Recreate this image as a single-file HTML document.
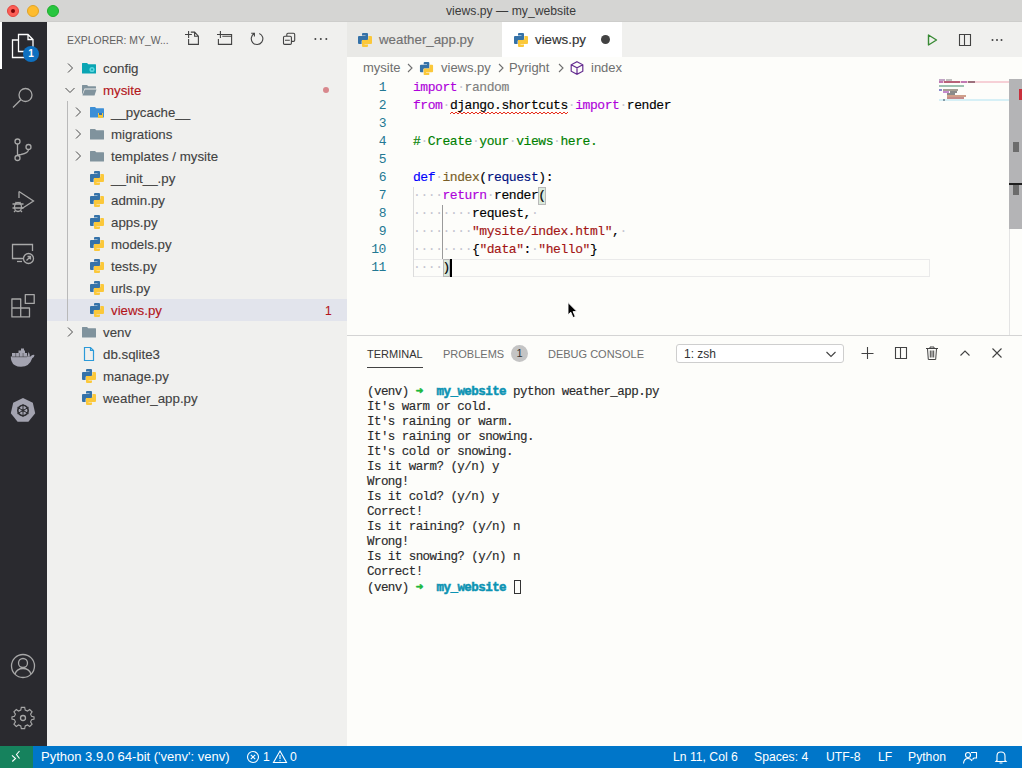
<!DOCTYPE html>
<html><head><meta charset="utf-8">
<style>
*{margin:0;padding:0;box-sizing:border-box}
html,body{width:1022px;height:768px;overflow:hidden;background:#fdfdfa;font-family:"Liberation Sans",sans-serif}
div,span,svg{position:absolute}
#title{left:0;top:0;width:1022px;height:22px;background:#d5d5d3;border-bottom:1px solid #cdcdcb}
#title .t{left:0;width:1022px;top:4px;text-align:center;font-size:12.2px;color:#3a3a3a;line-height:14px}
.tl{width:12px;height:12px;border-radius:50%;top:5px}
#act{left:0;top:22px;width:47px;height:724px;background:#2a2a2f}
#side{left:47px;top:22px;width:300px;height:724px;background:#f0f0ee}
#editor{left:347px;top:22px;width:675px;height:724px;background:#fdfdfa}
#tabs{left:347px;top:22px;width:675px;height:35px;background:#f0f0ee}
.tab{top:0;height:35px;font-size:13.3px;color:#717171;line-height:35px;white-space:nowrap;-webkit-text-stroke:0.15px currentColor}
#status{left:0;top:746px;width:1022px;height:22px;background:#0076c9;color:#fff;font-size:12.2px;line-height:22px;white-space:nowrap}
.row{left:0;width:300px;height:22px;font-size:13.3px;color:#424242;line-height:22px;white-space:nowrap;-webkit-text-stroke:0.12px currentColor}
.row span{position:static}
.code{left:66px;font-family:"Liberation Mono",monospace;font-size:13px;letter-spacing:-0.43px;white-space:pre;line-height:18px;color:#000;-webkit-text-stroke:0.15px currentColor}
.ln{left:0;width:39px;text-align:right;font-family:"Liberation Mono",monospace;font-size:13px;letter-spacing:-0.43px;line-height:18px;color:#237893}
.term{font-family:"Liberation Mono",monospace;font-size:12.5px;letter-spacing:-0.55px;white-space:pre;line-height:15px;color:#2a2a2a;-webkit-text-stroke:0.15px currentColor}
.term span{position:static}
.term b{-webkit-text-stroke:0.5px currentColor}
.code span{position:static}
.kw{color:#af00db}.df{color:#0000ff}.fn{color:#795e26}.pr{color:#001080}.st{color:#a31515}.cm{color:#008000}.fd{color:#7f7f7f}
.ws{color:#c4c4d0;-webkit-text-stroke:0}
.ic{stroke:#c5c5c5;fill:none;stroke-width:1.2}
.sic{stroke:#424242;fill:none;stroke-width:1.1}
</style></head><body>
<svg width="0" height="0" style="left:0;top:0">
  <defs>
    <symbol id="py" viewBox="0 0 16 16">
      <path fill="#3572a8" d="M6 1H10Q11 1 11 2V8H6Q4.6 8 4.6 9.4V12H2Q1 12 1 11V5Q1 4 2 4H8.5V3.4H5V2Q5 1 6 1Z"/>
      <path fill="#fbc83a" d="M10 15H6Q5 15 5 14V8H10Q11.4 8 11.4 6.6V4H14Q15 4 15 5V11Q15 12 14 12H7.5V12.6H11V14Q11 15 10 15Z"/>
    </symbol>
    <symbol id="fold" viewBox="0 0 16 16">
      <path fill="#80939d" d="M1.5 3h4.5l1.5 1.5h7v9h-13z"/>
    </symbol>
  </defs>
</svg>

<div id="title">
  <div class="tl" style="left:7px;background:#fd5e56;border:1px solid #e2463f"><div style="left:3px;top:3px;width:4px;height:4px;border-radius:50%;background:#7e0508"></div></div>
  <div class="tl" style="left:27px;background:#febc2e;border:1px solid #e1a325"></div>
  <div class="tl" style="left:47px;background:#27c63f;border:1px solid #1dad2b"></div>
  <div class="t">views.py — my_website</div>
</div>

<!-- ACTIVITY BAR -->
<div id="act">
  <div style="left:0;top:0;width:2px;height:47px;background:#fff"></div>
  <!-- files -->
  <svg style="left:9px;top:10px" width="28" height="28" viewBox="0 0 28 28" fill="none" stroke="#fff" stroke-width="1.3">
    <path d="M9.5 2.5H19L24 7.5V19.5H9.5Z M19 2.5V7.5H24"/>
    <path d="M9.5 8H3.5V25.5H16.5V19.5"/>
  </svg>
  <div style="left:23px;top:24px;width:16px;height:16px;border-radius:50%;background:#0e70c0;color:#fff;font-size:10px;font-weight:bold;text-align:center;line-height:16px">1</div>
  <!-- search -->
  <svg style="left:9px;top:62px" width="28" height="28" viewBox="0 0 28 28" fill="none" stroke="#a8a8a8" stroke-width="1.3">
    <circle cx="16.5" cy="11" r="6.5"/><path d="M11.8 15.8L4 23.5"/>
  </svg>
  <!-- scm -->
  <svg style="left:9px;top:114px" width="28" height="28" viewBox="0 0 28 28" fill="none" stroke="#a8a8a8" stroke-width="1.3">
    <circle cx="8.5" cy="5.5" r="2.5"/><circle cx="8.5" cy="22" r="2.5"/><circle cx="19.5" cy="11" r="2.5"/>
    <path d="M8.5 8V19.5 M19.5 13.5Q19.5 17 12 18.5Q9 19 8.5 19.5"/>
  </svg>
  <!-- debug -->
  <svg style="left:9px;top:166px" width="28" height="28" viewBox="0 0 28 28" fill="none" stroke="#a8a8a8" stroke-width="1.3">
    <path d="M10 3.5L24.5 13L13 20.5"/><path d="M10 3.5V10"/>
    <ellipse cx="9" cy="19" rx="3.5" ry="4.5"/><path d="M3.5 16H14.5 M3.5 20H14.5 M5 24L6.5 22.5 M13 24L11.5 22.5 M6.5 14L7.5 15 M11.5 14L10.5 15"/>
  </svg>
  <!-- remote explorer -->
  <svg style="left:9px;top:218px" width="28" height="28" viewBox="0 0 28 28" fill="none" stroke="#a8a8a8" stroke-width="1.3">
    <path d="M14 18.5H3.5V4.5H23.5V11"/><path d="M8 21.5H13"/>
    <circle cx="19.5" cy="18.5" r="5"/><path d="M17.5 20.5L21.5 16.5 M18.5 16.5H21.5V19.5"/>
  </svg>
  <!-- extensions -->
  <svg style="left:9px;top:270px" width="28" height="28" viewBox="0 0 28 28" fill="none" stroke="#a8a8a8" stroke-width="1.3">
    <path d="M2.9 7H11.7V24.9H2.9Z M2.9 16H20.5V24.9H11.7 M16.3 2.6H25.2V11.4H16.3Z" stroke-linejoin="round"/>
  </svg>
  <!-- docker -->
  <svg style="left:9px;top:322px" width="28" height="28" viewBox="0 0 28 28">
    <path fill="#a3a3b0" d="M1.8 12.5H21.5Q23 10.3 25.5 11Q25.3 13.5 23.2 14.3Q20.5 22.8 12 22.8Q4.5 22.8 2.5 17Q1.8 15 1.8 12.5Z"/>
    <path fill="#a3a3b0" d="M3 9H18V13H3Z M9.5 6.5H16V9.5H9.5Z M12 4.5H15V7H12Z M19.5 8Q21 9.5 20.8 12.5H18.5Z"/>
    <path d="M3 12.8H18 M6.7 9V12.8 M10.4 9V12.8 M14.1 9V12.8" stroke="#2c2c30" stroke-width="0.5"/>
  </svg>
  <!-- kubernetes -->
  <svg style="left:9px;top:374px" width="28" height="28" viewBox="0 0 28 28">
    <path fill="#a3a3b0" d="M14 2L23.8 6.7L26.2 17.3L19.4 25.8H8.6L1.8 17.3L4.2 6.7Z"/>
    <circle cx="14" cy="14.5" r="5.2" fill="none" stroke="#2c2c30" stroke-width="1.6"/>
    <path d="M14 8V21 M8.4 11.3L19.6 17.7 M8.4 17.7L19.6 11.3" stroke="#2c2c30" stroke-width="1"/>
    <circle cx="14" cy="14.5" r="1.3" fill="#2c2c30"/>
  </svg>
  <!-- account -->
  <svg style="left:9px;top:630px" width="28" height="28" viewBox="0 0 28 28" fill="none" stroke="#a8a8a8" stroke-width="1.3">
    <circle cx="14" cy="14" r="11.5"/><circle cx="14" cy="11" r="4.5"/><path d="M6 22Q8 16.5 14 16.5Q20 16.5 22 22"/>
  </svg>
  <!-- settings -->
  <svg style="left:9px;top:680px" width="28" height="28" viewBox="0 0 28 28" fill="none" stroke="#a8a8a8" stroke-width="1.3">
    <path d="M12 3.5H16L16.6 6.6L19.3 7.8L21.9 6L24.7 8.8L22.9 11.4L24.1 14.1L27 14.7V17.3L24.1 17.9L22.9 20.6L24.7 23.2L21.9 26L19.3 24.2L16.6 25.4L16 28.5H12L11.4 25.4L8.7 24.2L6.1 26L3.3 23.2L5.1 20.6L3.9 17.9L1 17.3V14.7L3.9 14.1L5.1 11.4L3.3 8.8L6.1 6L8.7 7.8L11.4 6.6Z" transform="translate(14 16) scale(.85) translate(-14 -16)"/>
    <circle cx="14" cy="16" r="2.5"/>
  </svg>
</div>

<!-- SIDEBAR -->
<div id="side">
  <div style="left:20px;top:13px;font-size:10.4px;color:#616161;line-height:12px;white-space:nowrap">EXPLORER: MY_W...</div>
  <!-- header icons -->
  <svg style="left:137px;top:8px" width="18" height="18" viewBox="0 0 18 18" class="sic"><path d="M4.6 9V14.4H14.4V6.2L10.6 2.1H6.8 M10.6 2.1V6.2H14.4 M1 4.5H7.9 M4.6 1V7.9"/></svg>
  <svg style="left:167px;top:8px" width="20" height="18" viewBox="0 0 20 18" class="sic"><path d="M4.4 9V14.4H17.6V4.5H9.6 M8.3 6.2H17.6 M3 4.5H9.6 M6.4 1V7.9"/></svg>
  <svg style="left:201px;top:8px" width="16" height="16" viewBox="0 0 16 16" class="sic"><path d="M11.3 3.4A5.8 5.8 0 1 1 6.4 3.6 M3.2 3.3H6.4V6.6"/></svg>
  <svg style="left:234px;top:8px" width="16" height="16" viewBox="0 0 16 16" class="sic"><path d="M5.8 6.2V4.4Q5.8 3.2 7 3.2H12.5Q13.7 3.2 13.7 4.4V10.2Q13.7 11.4 12.5 11.4H10.4 M3.7 6.2H9.2Q10.4 6.2 10.4 7.4V13.2Q10.4 14.4 9.2 14.4H3.7Q2.5 14.4 2.5 13.2V7.4Q2.5 6.2 3.7 6.2Z M4 10.3H8.8"/></svg>
  <svg style="left:266px;top:8px" width="16" height="16" viewBox="0 0 16 16"><circle cx="2.4" cy="9" r="1" fill="#424242"/><circle cx="7.8" cy="9" r="1" fill="#424242"/><circle cx="13.3" cy="9" r="1" fill="#424242"/></svg>
  <!-- selected row -->
  <div style="left:0;top:277px;width:300px;height:22px;background:#e2e4ec"></div>
  <div style="left:20px;top:79px;width:1px;height:220px;background:#b9b9b9"></div>
  <div class="row" style="top:35px"><svg style="left:15px;top:3px" width="16" height="16" viewBox="0 0 16 16"><path d="M6 3.5L10.5 8L6 12.5" stroke="#4a4a4a" stroke-width="1" fill="none"/></svg><svg style="left:34px;top:3px" width="16" height="16" viewBox="0 0 16 16"><path fill="#0aa5b3" d="M1 3.5Q1 3 1.5 3H6L7.3 4.3H14.5Q15 4.3 15 4.8V13Q15 13.5 14.5 13.5H1.5Q1 13.5 1 13Z"/><circle cx="11" cy="9.5" r="2.6" fill="#5ad6df"/><circle cx="11" cy="9.5" r="1" fill="#0aa5b3"/></svg><div style="left:56px;top:1px;color:#424242">config</div></div>
  <div class="row" style="top:57px"><svg style="left:15px;top:3px" width="16" height="16" viewBox="0 0 16 16"><path d="M3.5 6L8 10.5L12.5 6" stroke="#4a4a4a" stroke-width="1" fill="none"/></svg><svg style="left:34px;top:3px" width="16" height="16" viewBox="0 0 16 16"><path fill="#80939d" d="M1 3.5Q1 3 1.5 3H6L7.3 4.3H14.5Q15 4.3 15 4.8V6.5H3.5L1 13Z"/><path fill="#80939d" d="M3.8 7.5H15.5L13.5 13.5H1.5Z"/></svg><div style="left:56px;top:1px;color:#b3151a">mysite</div><div style="left:276px;top:8px;width:6px;height:6px;border-radius:50%;background:#d8888d"></div></div>
  <div class="row" style="top:79px"><svg style="left:23px;top:3px" width="16" height="16" viewBox="0 0 16 16"><path d="M6 3.5L10.5 8L6 12.5" stroke="#4a4a4a" stroke-width="1" fill="none"/></svg><svg style="left:42px;top:3px" width="16" height="16" viewBox="0 0 16 16"><path fill="#3d8fd6" d="M1 3.5Q1 3 1.5 3H6L7.3 4.3H14.5Q15 4.3 15 4.8V13Q15 13.5 14.5 13.5H1.5Q1 13.5 1 13Z"/><path fill="#f6c63a" d="M9 9H14V14H9Z"/><path fill="#3572a8" d="M10 9H13V11H10Z"/></svg><div style="left:64px;top:1px;color:#424242">__pycache__</div></div>
  <div class="row" style="top:101px"><svg style="left:23px;top:3px" width="16" height="16" viewBox="0 0 16 16"><path d="M6 3.5L10.5 8L6 12.5" stroke="#4a4a4a" stroke-width="1" fill="none"/></svg><svg style="left:42px;top:3px" width="16" height="16" viewBox="0 0 16 16"><path fill="#80939d" d="M1 3.5Q1 3 1.5 3H6L7.3 4.3H14.5Q15 4.3 15 4.8V13Q15 13.5 14.5 13.5H1.5Q1 13.5 1 13Z"/></svg><div style="left:64px;top:1px;color:#424242">migrations</div></div>
  <div class="row" style="top:123px"><svg style="left:23px;top:3px" width="16" height="16" viewBox="0 0 16 16"><path d="M6 3.5L10.5 8L6 12.5" stroke="#4a4a4a" stroke-width="1" fill="none"/></svg><svg style="left:42px;top:3px" width="16" height="16" viewBox="0 0 16 16"><path fill="#80939d" d="M1 3.5Q1 3 1.5 3H6L7.3 4.3H14.5Q15 4.3 15 4.8V13Q15 13.5 14.5 13.5H1.5Q1 13.5 1 13Z"/></svg><div style="left:64px;top:1px;color:#424242">templates / mysite</div></div>
  <div class="row" style="top:145px"><svg style="left:42px;top:3px" width="16" height="16"><use href="#py"/></svg><div style="left:64px;top:1px;color:#424242">__init__.py</div></div>
  <div class="row" style="top:167px"><svg style="left:42px;top:3px" width="16" height="16"><use href="#py"/></svg><div style="left:64px;top:1px;color:#424242">admin.py</div></div>
  <div class="row" style="top:189px"><svg style="left:42px;top:3px" width="16" height="16"><use href="#py"/></svg><div style="left:64px;top:1px;color:#424242">apps.py</div></div>
  <div class="row" style="top:211px"><svg style="left:42px;top:3px" width="16" height="16"><use href="#py"/></svg><div style="left:64px;top:1px;color:#424242">models.py</div></div>
  <div class="row" style="top:233px"><svg style="left:42px;top:3px" width="16" height="16"><use href="#py"/></svg><div style="left:64px;top:1px;color:#424242">tests.py</div></div>
  <div class="row" style="top:255px"><svg style="left:42px;top:3px" width="16" height="16"><use href="#py"/></svg><div style="left:64px;top:1px;color:#424242">urls.py</div></div>
  <div class="row" style="top:277px"><svg style="left:42px;top:3px" width="16" height="16"><use href="#py"/></svg><div style="left:64px;top:1px;color:#b3151a">views.py</div><div style="left:278px;top:1px;color:#b3151a;font-size:12px">1</div></div>
  <div class="row" style="top:299px"><svg style="left:15px;top:3px" width="16" height="16" viewBox="0 0 16 16"><path d="M6 3.5L10.5 8L6 12.5" stroke="#4a4a4a" stroke-width="1" fill="none"/></svg><svg style="left:34px;top:3px" width="16" height="16" viewBox="0 0 16 16"><path fill="#80939d" d="M1 3.5Q1 3 1.5 3H6L7.3 4.3H14.5Q15 4.3 15 4.8V13Q15 13.5 14.5 13.5H1.5Q1 13.5 1 13Z"/></svg><div style="left:56px;top:1px;color:#424242">venv</div></div>
  <div class="row" style="top:321px"><svg style="left:34px;top:3px" width="16" height="16" viewBox="0 0 16 16"><path d="M3.5 1.5H9.5L12.5 4.5V14.5H3.5Z M9.5 1.5V4.5H12.5" stroke="#2b9ad9" stroke-width="1.2" fill="none"/></svg><div style="left:56px;top:1px;color:#424242">db.sqlite3</div></div>
  <div class="row" style="top:343px"><svg style="left:34px;top:3px" width="16" height="16"><use href="#py"/></svg><div style="left:56px;top:1px;color:#424242">manage.py</div></div>
  <div class="row" style="top:365px"><svg style="left:34px;top:3px" width="16" height="16"><use href="#py"/></svg><div style="left:56px;top:1px;color:#424242">weather_app.py</div></div>
</div>

<!-- EDITOR -->
<div id="editor">
  <!-- breadcrumbs -->
  <div style="left:0;top:35px;width:675px;height:22px;font-size:13px;color:#6f6f6f;line-height:22px;white-space:nowrap">
    <span style="left:16px;top:0">mysite</span>
    <svg style="left:55px;top:3px" width="16" height="16" viewBox="0 0 16 16"><path d="M6 4L10 8L6 12" stroke="#6f6f6f" stroke-width="1.1" fill="none"/></svg>
    <svg style="left:72px;top:4px" width="15" height="15"><use href="#py"/></svg>
    <span style="left:94px;top:0">views.py</span>
    <svg style="left:146px;top:3px" width="16" height="16" viewBox="0 0 16 16"><path d="M6 4L10 8L6 12" stroke="#6f6f6f" stroke-width="1.1" fill="none"/></svg>
    <span style="left:162px;top:0">Pyright</span>
    <svg style="left:206px;top:3px" width="16" height="16" viewBox="0 0 16 16"><path d="M6 4L10 8L6 12" stroke="#6f6f6f" stroke-width="1.1" fill="none"/></svg>
    <svg style="left:222px;top:3px" width="16" height="16" viewBox="0 0 16 16" fill="none" stroke="#652d90" stroke-width="1.2"><path d="M8 1.8L13.8 4.8V11.2L8 14.2L2.2 11.2V4.8Z M2.2 4.8L8 7.8L13.8 4.8 M8 7.8V14.2"/></svg>
    <span style="left:244px;top:0">index</span>
  </div>
  <!-- current line box -->
  <div style="left:66px;top:237px;width:517px;height:18px;border:1px solid #eaeaea"></div>
  <!-- indent guides -->
  <div style="left:66px;top:165px;width:1px;height:90px;background:#dcdcdc"></div>
  <div style="left:95px;top:183px;width:1px;height:54px;background:#9a9a9a"></div>
  <!-- bracket match -->
  <div style="left:191px;top:165px;width:8px;height:18px;background:#dbe9db;border:1px solid #b9b9b9"></div>
  <div style="left:96px;top:237px;width:7px;height:18px;background:#dbe9db;border:1px solid #b9b9b9"></div>
  <!-- squiggle -->
  <svg style="left:103px;top:89px" width="118" height="4" viewBox="0 0 118 4"><path d="M0 3 L2 1 L4 3 L6 1 L8 3 L10 1 L12 3 L14 1 L16 3 L18 1 L20 3 L22 1 L24 3 L26 1 L28 3 L30 1 L32 3 L34 1 L36 3 L38 1 L40 3 L42 1 L44 3 L46 1 L48 3 L50 1 L52 3 L54 1 L56 3 L58 1 L60 3 L62 1 L64 3 L66 1 L68 3 L70 1 L72 3 L74 1 L76 3 L78 1 L80 3 L82 1 L84 3 L86 1 L88 3 L90 1 L92 3 L94 1 L96 3 L98 1 L100 3 L102 1 L104 3 L106 1 L108 3 L110 1 L112 3 L114 1 L116 3 L118 1" stroke="#e51400" stroke-width="0.9" fill="none"/></svg>
  <div class="ln" style="top:57px">1</div>
  <div class="code" style="top:57px"><span class="kw">import</span><span class="ws">·</span><span class="fd">random</span></div>
  <div class="ln" style="top:75px">2</div>
  <div class="code" style="top:75px"><span class="kw">from</span><span class="ws">·</span>django.shortcuts<span class="ws">·</span><span class="kw">import</span><span class="ws">·</span>render</div>
  <div class="ln" style="top:93px">3</div>
  <div class="ln" style="top:111px">4</div>
  <div class="code" style="top:111px"><span class="cm">#<span class="ws">·</span>Create<span class="ws">·</span>your<span class="ws">·</span>views<span class="ws">·</span>here.</span></div>
  <div class="ln" style="top:129px">5</div>
  <div class="ln" style="top:147px">6</div>
  <div class="code" style="top:147px"><span class="df">def</span><span class="ws">·</span><span class="fn">index</span>(<span class="pr">request</span>):</div>
  <div class="ln" style="top:165px">7</div>
  <div class="code" style="top:165px"><span class="ws">·</span><span class="ws">·</span><span class="ws">·</span><span class="ws">·</span><span class="kw">return</span><span class="ws">·</span>render(</div>
  <div class="ln" style="top:183px">8</div>
  <div class="code" style="top:183px"><span class="ws">·</span><span class="ws">·</span><span class="ws">·</span><span class="ws">·</span><span class="ws">·</span><span class="ws">·</span><span class="ws">·</span><span class="ws">·</span>request,<span class="ws">·</span></div>
  <div class="ln" style="top:201px">9</div>
  <div class="code" style="top:201px"><span class="ws">·</span><span class="ws">·</span><span class="ws">·</span><span class="ws">·</span><span class="ws">·</span><span class="ws">·</span><span class="ws">·</span><span class="ws">·</span><span class="st">"mysite/index.html"</span>,<span class="ws">·</span></div>
  <div class="ln" style="top:219px">10</div>
  <div class="code" style="top:219px"><span class="ws">·</span><span class="ws">·</span><span class="ws">·</span><span class="ws">·</span><span class="ws">·</span><span class="ws">·</span><span class="ws">·</span><span class="ws">·</span>{<span class="st">"data"</span>:<span class="ws">·</span><span class="st">"hello"</span>}</div>
  <div class="ln" style="top:237px">11</div>
  <div class="code" style="top:237px"><span class="ws">·</span><span class="ws">·</span><span class="ws">·</span><span class="ws">·</span>)</div>
  <!-- minimap -->
  <div style="left:592px;top:57px;width:70px;height:257px">
    <div style="left:0;top:2px;width:70px;height:2px;background:#f6d0d6"></div>
    <div style="left:0;top:20px;width:70px;height:2px;background:#d6f0f6"></div>
    <div style="left:0px;top:0px;width:6px;height:2px;background:#9a6aa0;opacity:.6"></div>
    <div style="left:7px;top:0px;width:6px;height:2px;background:#9a9a9a;opacity:.6"></div>
    <div style="left:0px;top:2px;width:4px;height:2px;background:#a0409a;opacity:.6"></div>
    <div style="left:5px;top:2px;width:16px;height:2px;background:#8e1838;opacity:.6"></div>
    <div style="left:22px;top:2px;width:6px;height:2px;background:#a0409a;opacity:.6"></div>
    <div style="left:29px;top:2px;width:7px;height:2px;background:#603040;opacity:.6"></div>
    <div style="left:0px;top:6px;width:25px;height:2px;background:#5f9a80;opacity:.6"></div>
    <div style="left:0px;top:10px;width:3px;height:2px;background:#3a3ab0;opacity:.6"></div>
    <div style="left:4px;top:10px;width:15px;height:2px;background:#6a6050;opacity:.6"></div>
    <div style="left:4px;top:12px;width:6px;height:2px;background:#a040b0;opacity:.6"></div>
    <div style="left:11px;top:12px;width:7px;height:2px;background:#404040;opacity:.6"></div>
    <div style="left:8px;top:14px;width:8px;height:2px;background:#404040;opacity:.6"></div>
    <div style="left:8px;top:16px;width:19px;height:2px;background:#b06040;opacity:.6"></div>
    <div style="left:8px;top:18px;width:17px;height:2px;background:#a04040;opacity:.6"></div>
    <div style="left:4px;top:20px;width:2px;height:2px;background:#506070;opacity:.6"></div>
  </div>
  <!-- vertical ruler / scrollbar -->
  <div style="left:662px;top:57px;width:1px;height:257px;background:#e4e4e4"></div>
  <div style="left:662px;top:57px;width:13px;height:150px;background:#b4b4b6"></div>
  <div style="left:672px;top:67px;width:3px;height:11px;background:#c8303c"></div>
  <div style="left:666px;top:120px;width:6px;height:10px;background:#6c6c6c"></div>
  <div style="left:662px;top:161px;width:13px;height:2px;background:#1e1e1e"></div>
  <div style="left:666px;top:163px;width:6px;height:10px;background:#6c6c6c"></div>
  <!-- cursor -->
  <div style="left:103px;top:237px;width:2px;height:18px;background:#000"></div>
</div>

<div id="tabs">
  <svg style="left:577px;top:10px" width="16" height="16" viewBox="0 0 16 16"><path d="M4.5 3L12.5 8L4.5 13Z" fill="none" stroke="#388a34" stroke-width="1.4" stroke-linejoin="round"/></svg>
  <svg style="left:610px;top:10px" width="16" height="16" viewBox="0 0 16 16"><path d="M2.5 2.5H13.5V13.5H2.5Z M7.5 2.5V13.5" fill="none" stroke="#424242" stroke-width="1.1"/></svg>
  <svg style="left:642px;top:10px" width="16" height="16" viewBox="0 0 16 16"><circle cx="3.5" cy="8" r="1" fill="#424242"/><circle cx="8" cy="8" r="1" fill="#424242"/><circle cx="12.5" cy="8" r="1" fill="#424242"/></svg>
  <div class="tab" style="left:0;width:155px;background:#e9e9e6">
    <svg style="left:10px;top:10px" width="16" height="16"><use href="#py"/></svg>
    <span style="left:32px;top:0">weather_app.py</span>
  </div>
  <div class="tab" style="left:155px;width:120px;background:#fff;color:#333">
    <svg style="left:11px;top:10px" width="16" height="16"><use href="#py"/></svg>
    <span style="left:33px;top:0">views.py</span>
    <div style="left:99px;top:13px;width:9px;height:9px;border-radius:50%;background:#424242"></div>
  </div>
</div>

<!-- PANEL -->
<div style="left:347px;top:335px;width:675px;height:1px;background:#d4d4d4"></div>
<div style="left:347px;top:336px;width:675px;height:410px">
  <div style="left:20px;top:12px;font-size:11px;color:#333;line-height:13px;white-space:nowrap">TERMINAL</div>
  <div style="left:20px;top:31px;width:56px;height:1px;background:#424242"></div>
  <div style="left:96px;top:12px;font-size:11px;color:#6f6f6f;line-height:13px;white-space:nowrap">PROBLEMS</div>
  <div style="left:164px;top:9px;width:17px;height:17px;border-radius:50%;background:#c4c4c4;color:#333;font-size:11px;text-align:center;line-height:17px">1</div>
  <div style="left:201px;top:12px;font-size:11px;color:#6f6f6f;line-height:13px;white-space:nowrap">DEBUG CONSOLE</div>
  <div style="left:329px;top:8px;width:168px;height:19px;border:1px solid #cecece;border-radius:3px;background:#fff"></div>
  <div style="left:337px;top:11px;font-size:12px;color:#333;line-height:15px;white-space:nowrap">1: zsh</div>
  <svg style="left:476px;top:10px" width="16" height="16" viewBox="0 0 16 16"><path d="M3.5 6L8 10.5L12.5 6" stroke="#424242" stroke-width="1.1" fill="none"/></svg>
  <svg style="left:513px;top:9px" width="16" height="16" viewBox="0 0 16 16"><path d="M7.5 2V14M1.5 8.5H13.5" stroke="#424242" stroke-width="1.1" fill="none"/></svg>
  <svg style="left:546px;top:9px" width="16" height="16" viewBox="0 0 16 16"><path d="M2.5 2.5H13.5V13.5H2.5Z M7.5 2.5V13.5" stroke="#424242" stroke-width="1.1" fill="none"/></svg>
  <svg style="left:577px;top:9px" width="16" height="16" viewBox="0 0 16 16"><path d="M2 3.5H14 M6 3.5V2H10V3.5 M3.5 3.5L4.3 14.5H11.7L12.5 3.5 M6.3 5.5V12.5 M8 5.5V12.5 M9.7 5.5V12.5" stroke="#424242" stroke-width="1" fill="none"/></svg>
  <svg style="left:610px;top:9px" width="16" height="16" viewBox="0 0 16 16"><path d="M3.5 10.5L8 6L12.5 10.5" stroke="#424242" stroke-width="1.1" fill="none"/></svg>
  <svg style="left:642px;top:9px" width="16" height="16" viewBox="0 0 16 16"><path d="M3.5 3.5L12.5 12.5M12.5 3.5L3.5 12.5" stroke="#424242" stroke-width="1.1" fill="none"/></svg>
  <div class="term" style="left:20px;top:49px">(venv) <b style="color:#1cb83c">➜</b>  <b style="color:#0c93b3">my_website</b> python weather_app.py</div>
  <div class="term" style="left:20px;top:64px">It's warm or cold.</div>
  <div class="term" style="left:20px;top:79px">It's raining or warm.</div>
  <div class="term" style="left:20px;top:94px">It's raining or snowing.</div>
  <div class="term" style="left:20px;top:109px">It's cold or snowing.</div>
  <div class="term" style="left:20px;top:124px">Is it warm? (y/n) y</div>
  <div class="term" style="left:20px;top:139px">Wrong!</div>
  <div class="term" style="left:20px;top:154px">Is it cold? (y/n) y</div>
  <div class="term" style="left:20px;top:169px">Correct!</div>
  <div class="term" style="left:20px;top:184px">Is it raining? (y/n) n</div>
  <div class="term" style="left:20px;top:199px">Wrong!</div>
  <div class="term" style="left:20px;top:214px">Is it snowing? (y/n) n</div>
  <div class="term" style="left:20px;top:229px">Correct!</div>
  <div class="term" style="left:20px;top:244px">(venv) <b style="color:#1cb83c">➜</b>  <b style="color:#0c93b3">my_website</b> <span style="display:inline-block;width:7px;height:14px;border:1px solid #333;vertical-align:-3px;margin-left:1px"></span></div>
</div>
<svg style="left:566px;top:301px" width="14" height="20" viewBox="0 0 14 20"><path d="M2 1.5V13.8L4.8 11.2L7 16.6L9.3 15.6L7.1 10.6H11Z" fill="#000" stroke="#fff" stroke-width="0.9" stroke-linejoin="round"/></svg>

<!-- STATUS -->
<div id="status">
  <div style="left:0;top:0;width:33px;height:22px;background:#16825d"></div>
  <svg style="left:0;top:0" width="33" height="22" viewBox="0 0 33 22"><path d="M12 9.3L15.5 12.5L12.3 15.5 M19.5 5L16.5 8.5L19.5 12.5" stroke="#fff" stroke-width="1.1" fill="none"/></svg>
  <div style="left:41px;top:0;font-size:13px">Python 3.9.0 64-bit ('venv': venv)</div>
  <svg style="left:246px;top:4px" width="14" height="14" viewBox="0 0 14 14"><circle cx="7" cy="7" r="5.5" stroke="#fff" stroke-width="1.1" fill="none"/><path d="M4.8 4.8L9.2 9.2M9.2 4.8L4.8 9.2" stroke="#fff" stroke-width="1.1"/></svg>
  <div style="left:263px;top:0">1</div>
  <svg style="left:272px;top:3px" width="16" height="16" viewBox="0 0 16 16"><path d="M8 2L14.5 13.5H1.5Z M8 6V10 M8 11.3V12.3" stroke="#fff" stroke-width="1.1" fill="none"/></svg>
  <div style="left:290px;top:0">0</div>
  <div style="left:673px;top:0">Ln 11, Col 6</div>
  <div style="left:754px;top:0">Spaces: 4</div>
  <div style="left:826px;top:0">UTF-8</div>
  <div style="left:878px;top:0">LF</div>
  <div style="left:908px;top:0">Python</div>
  <svg style="left:962px;top:3px" width="16" height="16" viewBox="0 0 16 16"><circle cx="6" cy="6" r="2.5" stroke="#fff" stroke-width="1.1" fill="none"/><path d="M1.5 14.5Q2 9.5 6 9.5Q9 9.5 10 12 M9 3.5H14.5V9H12L10.5 10.5" stroke="#fff" stroke-width="1.1" fill="none"/></svg>
  <svg style="left:993px;top:3px" width="16" height="16" viewBox="0 0 16 16"><path d="M4 11.5V7Q4 3 8 3Q12 3 12 7V11.5L13 12.5H3Z M6.5 14H9.5" stroke="#fff" stroke-width="1.1" fill="none"/></svg>
</div>
</body></html>
